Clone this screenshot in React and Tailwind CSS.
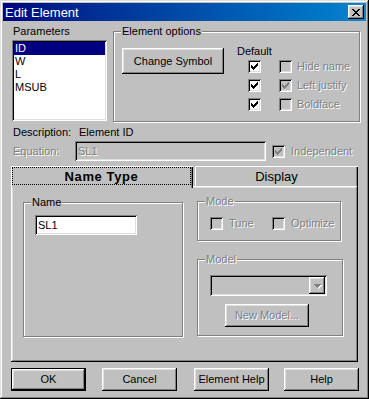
import React from "react";

const RAISED = "shadow-[inset_-1px_-1px_#000,inset_1px_1px_#fff,inset_-2px_-2px_#808080,inset_2px_2px_#dfdfdf]";
const SUNKEN = "shadow-[inset_1px_1px_#808080,inset_-1px_-1px_#fff,inset_2px_2px_#000,inset_-2px_-2px_#dfdfdf]";
const DIS = "text-[#808080] [text-shadow:1px_1px_0_#fff]";

function Pixels({ rows, color, w, h }) {
  const rects = [];
  rows.forEach((r, y) => {
    for (let x = 0; x < r.length; x++) if (r[x] === "#") rects.push(<rect key={x + "-" + y} x={x} y={y} width="1" height="1" fill={color} />);
  });
  return (
    <svg width={w} height={h} viewBox={`0 0 ${w} ${h}`} shapeRendering="crispEdges">
      {rects}
    </svg>
  );
}

const CHECK = ["......#", ".....##", "#...###", "##.###.", "#####..", ".###...", "..#...."];
const XGLYPH = ["##....##", ".##..##.", "..####..", "...##...", "..####..", ".##..##.", "##....##"];
const ARROW = ["#######", ".#####.", "..###..", "...#..."];

function Check({ checked, disabled }) {
  return (
    <div className={`w-[13px] h-[13px] shrink-0 flex items-center justify-center ${disabled ? "bg-[#c0c0c0]" : "bg-white"} ${SUNKEN}`}>
      {checked && <Pixels rows={CHECK} color={disabled ? "#808080" : "#000"} w={7} h={7} />}
    </div>
  );
}

function Group({ label, disabled, className, children }) {
  return (
    <div className={`relative border border-[#808080] shadow-[inset_1px_1px_#fff,1px_1px_#fff] ${className}`}>
      <span className={`absolute top-[-7px] left-[7px] px-[1px] bg-[#c0c0c0] leading-[13px] ${disabled ? DIS : ""}`}>{label}</span>
      {children}
    </div>
  );
}

function Button({ children, className = "", disabled }) {
  return (
    <div className={`flex items-center justify-center bg-[#c0c0c0] ${RAISED} ${className} ${disabled ? DIS : ""}`}>{children}</div>
  );
}

export default function App() {
  return (
    <div className="w-[369px] h-[399px] p-[3px] bg-[#c0c0c0] flex flex-col text-[11px] text-black font-['Liberation_Sans',Arial,sans-serif] shadow-[inset_-1px_-1px_#000,inset_1px_1px_#dfdfdf,inset_-2px_-2px_#808080,inset_2px_2px_#fff] overflow-hidden select-none">
      {/* Title bar */}
      <div className="h-[18px] shrink-0 flex items-center justify-between bg-linear-to-r from-[#000080] to-[#1084d0]">
        <span className="pl-[2px] text-[13px] leading-[15px] text-white">Edit Element</span>
        <div className={`w-[16px] h-[14px] mr-[2px] flex items-center justify-center bg-[#c0c0c0] ${RAISED}`}>
          <Pixels rows={XGLYPH} color="#000" w={8} h={7} />
        </div>
      </div>

      {/* Row 1 */}
      <div className="mt-[4px] pl-[9px] flex items-start">
        <div className="w-[95px] shrink-0">
          <div className="leading-[13px] h-[13px] pl-[1px]">Parameters</div>
          <div className={`mt-[2px] h-[81px] bg-white p-[2px] ${SUNKEN}`}>
            <div className="h-[13px] leading-[13px] pl-[1px] bg-[#000080] text-white">ID</div>
            <div className="h-[13px] leading-[13px] pl-[1px]">W</div>
            <div className="h-[13px] leading-[13px] pl-[1px]">L</div>
            <div className="h-[13px] leading-[13px] pl-[1px]">MSUB</div>
          </div>
        </div>
        <Group label="Element options" className="ml-[6px] mt-[6px] w-[247px] h-[91px] shrink-0">
          <div className="pt-[16px] pl-[8px] flex items-start">
            <Button className="w-[102px] h-[26px]">Change Symbol</Button>
            <div className="ml-[13px] mt-[-3px]">
              <div className="h-[13px] leading-[13px]">Default</div>
              <div className="mt-[2px] ml-[11px] flex flex-col gap-[6px]">
                <div className="flex items-center h-[13px]">
                  <Check checked />
                  <div className="ml-[18px]"><Check disabled /></div>
                  <span className={`ml-[5px] leading-[13px] ${DIS}`}>Hide name</span>
                </div>
                <div className="flex items-center h-[13px]">
                  <Check checked />
                  <div className="ml-[18px]"><Check checked disabled /></div>
                  <span className={`ml-[5px] leading-[13px] ${DIS}`}>Left justify</span>
                </div>
                <div className="flex items-center h-[13px]">
                  <Check checked />
                  <div className="ml-[18px]"><Check disabled /></div>
                  <span className={`ml-[5px] leading-[13px] ${DIS}`}>Boldface</span>
                </div>
              </div>
            </div>
          </div>
        </Group>
      </div>

      {/* Description */}
      <div className="mt-[4px] pl-[10px] flex h-[13px] leading-[13px]">
        <span className="w-[66px] shrink-0">Description:</span>
        <span>Element ID</span>
      </div>

      {/* Equation */}
      <div className="mt-[2px] pl-[10px] flex items-center h-[20px]">
        <span className={`w-[62px] shrink-0 leading-[13px] ${DIS}`}>Equation:</span>
        <div className={`w-[191px] h-[20px] shrink-0 bg-[#c0c0c0] pl-[3px] flex items-center ${SUNKEN}`}>
          <span className={`leading-[13px] ${DIS}`}>SL1</span>
        </div>
        <div className="ml-[6px]"><Check checked disabled /></div>
        <span className={`ml-[6px] leading-[13px] ${DIS}`}>Independent</span>
      </div>

      {/* Tabs */}
      <div className="mt-[5px] pl-[8px] flex items-start h-[20px]">
        <div className="relative z-10 w-[182px] h-[22px] shrink-0 bg-[#c0c0c0] p-[1px] shadow-[inset_1px_1px_#fff,inset_-1px_0_#000,inset_-2px_0_#808080]">
          <div className="h-[18px] mr-[1px] border border-dotted border-black flex items-center justify-center text-[13px] font-bold tracking-[0.6px] leading-[15px]">
            Name Type
          </div>
        </div>
        <div className="ml-[2px] w-[163px] h-[20px] shrink-0 flex items-center justify-center text-[13px] leading-[15px] shadow-[inset_1px_1px_#fff,inset_-1px_0_#000,inset_-2px_0_#808080]">
          Display
        </div>
      </div>

      {/* Tab panel */}
      <div className={`ml-[8px] w-[347px] h-[176px] shrink-0 ${RAISED} pt-[15px] pl-[12px] flex items-start`}>
        <Group label="Name" className="mt-[1px] w-[160px] h-[135px] shrink-0">
          <div className="pt-[12px] pl-[11px]">
            <div className={`w-[102px] h-[20px] bg-white pl-[3px] flex items-center ${SUNKEN}`}>
              <span className="leading-[13px]">SL1</span>
            </div>
          </div>
        </Group>
        <div className="ml-[14px] flex flex-col">
          <Group label="Mode" disabled className="w-[144px] h-[40px]">
            <div className="pt-[15px] pl-[12px] flex items-center">
              <div className="w-[62px] flex items-center">
                <Check disabled />
                <span className={`ml-[6px] leading-[13px] ${DIS}`}>Tune</span>
              </div>
              <Check disabled />
              <span className={`ml-[6px] leading-[13px] ${DIS}`}>Optimize</span>
            </div>
          </Group>
          <Group label="Model" disabled className="mt-[18px] w-[146px] h-[77px]">
            <div className="pt-[15px] pl-[12px]">
              <div className={`w-[117px] h-[21px] bg-[#c0c0c0] p-[2px] flex justify-end ${SUNKEN}`}>
                <div className={`w-[16px] h-[17px] flex items-center justify-center bg-[#c0c0c0] ${RAISED}`}>
                  <div className="relative">
                    <div className="absolute left-[1px] top-[1px]"><Pixels rows={ARROW} color="#fff" w={7} h={4} /></div>
                    <div className="relative"><Pixels rows={ARROW} color="#808080" w={7} h={4} /></div>
                  </div>
                </div>
              </div>
              <Button disabled className="mt-[8px] ml-[15px] w-[84px] h-[23px]">New Model...</Button>
            </div>
          </Group>
        </div>
      </div>

      {/* Bottom buttons */}
      <div className="mt-[6px] pl-[8px] flex">
        <div className="w-[75px] h-[23px] border border-black">
          <Button className="w-full h-full">OK</Button>
        </div>
        <Button className="ml-[16px] w-[75px] h-[23px]">Cancel</Button>
        <Button className="ml-[17px] w-[75px] h-[23px]">Element Help</Button>
        <Button className="ml-[15px] w-[75px] h-[23px]">Help</Button>
      </div>
    </div>
  );
}
